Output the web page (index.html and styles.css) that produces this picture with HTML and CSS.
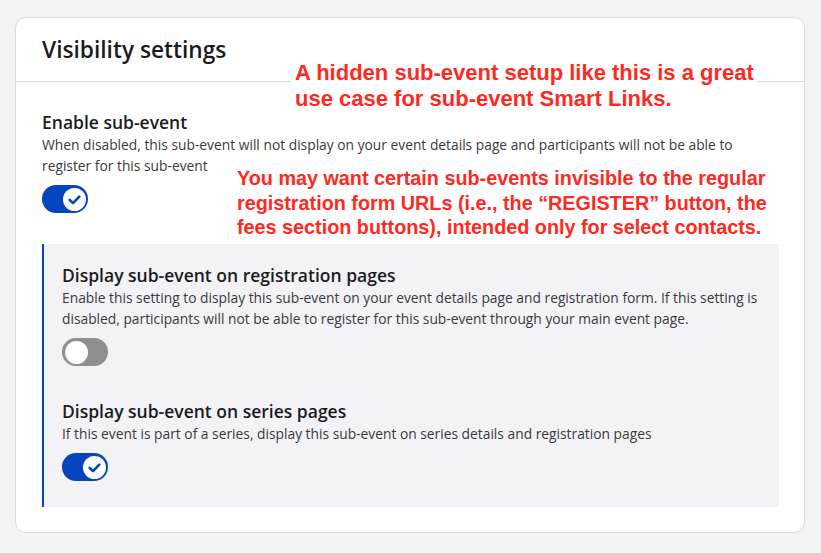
FILE: index.html
```html
<!DOCTYPE html>
<html lang="en">
<head>
  <meta charset="UTF-8" />
  <title>Visibility settings</title>
  <link rel="stylesheet" href="styles.css">
</head>
<body>

<div class="card">
  <div class="card-header">
    <h2>Visibility settings</h2>
  </div>

  <div class="card-body">
    <div class="setting">
      <h3>Enable sub-event</h3>
      <p>When disabled, this sub-event will not display on your event details page and participants will not be able to register for this sub-event</p>
      <span class="toggle on"><span class="knob"><svg viewBox="0 0 24 24"><path d="M6.5 12.5l3.8 3.6 7.2-7.4" /></svg></span></span>
    </div>

    <div class="sub-settings">
      <div class="setting">
        <h3>Display sub-event on registration pages</h3>
        <p>Enable this setting to display this sub-event on your event details page and registration form. If this setting is disabled, participants will not be able to register for this sub-event through your main event page.</p>
        <span class="toggle"><span class="knob"></span></span>
      </div>
      <div class="setting">
        <h3>Display sub-event on series pages</h3>
        <p>If this event is part of a series, display this sub-event on series details and registration pages</p>
        <span class="toggle on"><span class="knob"><svg viewBox="0 0 24 24"><path d="M6.5 12.5l3.8 3.6 7.2-7.4" /></svg></span></span>
      </div>
    </div>
  </div>

  <!-- notes laid over the screenshot -->
  <div class="note note-top">A hidden sub-event setup like this is a great<br>use case for sub-event Smart Links.</div>
  <div class="note note-mid">You may want certain sub-events invisible to the regular<br>registration form URLs (i.e., the &ldquo;REGISTER&rdquo; button, the<br>fees section buttons), intended only for select contacts.</div>
</div>

</body>
</html>
```

FILE: styles.css
```css
body { margin: 0; background: #f2f2f7; font-family: "Open Sans", sans-serif; color: #1c1c1e; }

.card {
  position: relative;
  width: 790px;
  box-sizing: border-box;
  margin: 17px 0 0 15px;
  background: #fff;
  border: 1px solid #dcdce0;
  border-radius: 11px;
}
.card-header {
  height: 63px;
  display: flex;
  align-items: center;
  padding: 0 26px;
  border-bottom: 1px solid #dcdce0;
}
.card-header h2 { margin: 0; font-size: 22.7px; font-weight: 600; }
.card-body { padding: 28px 25px 25px 26px; }

.setting h3 { margin: 0; font-size: 17.5px; line-height: 24px; font-weight: 600; }
.setting p { margin: 0; font-size: 13.8px; line-height: 21px; color: #3a3a3c; }
.setting .toggle { margin-top: 9px; }

.sub-settings {
  margin-top: 31px;
  background: #f2f2f7;
  border-left: 2px solid #0645bd;
  padding: 19px 10px 26px 18px;
}
.sub-settings .setting + .setting { margin-top: 33px; }

.toggle {
  display: flex;
  align-items: center;
  width: 46px;
  height: 28px;
  box-sizing: border-box;
  padding: 0 2.5px;
  border-radius: 14px;
  background: #8e8e93;
}
.toggle.on { background: #0645bd; justify-content: flex-end; }
.knob {
  width: 23px;
  height: 23px;
  border-radius: 50%;
  background: #fff;
  display: flex;
  align-items: center;
  justify-content: center;
}
.knob svg { width: 21px; height: 21px; fill: none; stroke: #0645bd; stroke-width: 3; stroke-linecap: round; stroke-linejoin: round; }

.note {
  position: absolute;
  background: #fff;
  color: #fc2a1f;
  font-family: "Liberation Sans", Arial, sans-serif;
  font-weight: bold;
  white-space: nowrap;
  padding: 2px 4px;
}
.note-top { left: 275px; top: 40px; width: 458px; font-size: 22px; line-height: 26px; }
.note-mid { left: 217px; top: 146px; font-size: 19.8px; line-height: 24.5px; }
```
